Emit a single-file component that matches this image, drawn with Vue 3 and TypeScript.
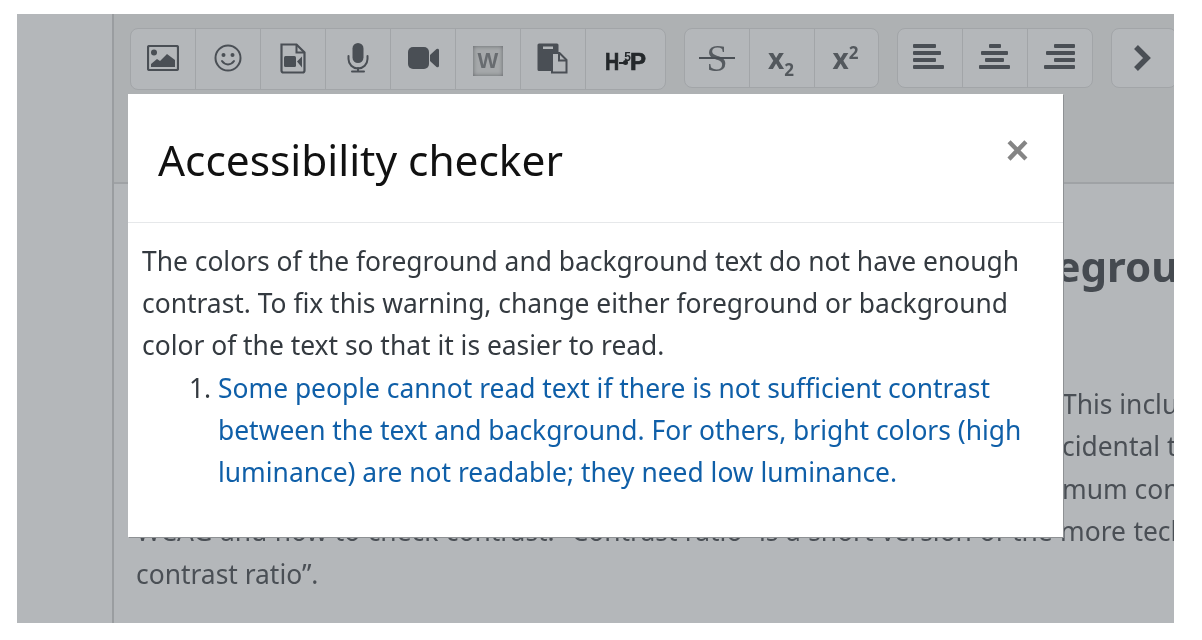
<script setup lang="ts">
const firstGroup = ['image', 'emoji', 'videofile', 'mic', 'video', 'word', 'paste', 'h5p']
const alignGroup = ['left', 'center', 'right']
</script>

<template>
  <div class="page">
    <aside class="side"></aside>
    <main class="main">
      <div class="toolbar">
        <div class="group first">
          <button v-for="b in firstGroup" :key="b" class="btn" :class="{ wide: b === 'h5p' }" type="button">
            <svg v-if="b === 'image'" width="32" height="26" viewBox="0 0 32 26">
              <rect x="1" y="1" width="30" height="24" rx="1.5" fill="none" stroke="#4a4f55" stroke-width="2.2" />
              <circle cx="7" cy="7.500" r="3" fill="#4a4f55" />
              <path d="M4 22v-3l6-5 3 2 7-7 4 3 4 3v7z" fill="#4a4f55" />
            </svg>
            <svg v-else-if="b === 'emoji'" width="28" height="28" viewBox="0 0 28 28">
              <circle cx="14" cy="14" r="12.500" fill="none" stroke="#4a4f55" stroke-width="2" />
              <circle cx="9.500" cy="11" r="2" fill="#4a4f55" />
              <circle cx="18.500" cy="11" r="2" fill="#4a4f55" />
              <path d="M8 17c3 4.500 9 4.500 12 0" fill="none" stroke="#4a4f55" stroke-width="2" stroke-linecap="round" />
            </svg>
            <svg v-else-if="b === 'videofile'" width="26" height="31" viewBox="0 0 26 31">
              <path d="M1.500 1.500h15l8 8v18a2 2 0 0 1-2 2H3.500a2 2 0 0 1-2-2z" fill="none" stroke="#4a4f55" stroke-width="2.200" />
              <path d="M16.500 1.500v8h8" fill="none" stroke="#4a4f55" stroke-width="2" />
              <rect x="4" y="13" width="12" height="11" rx="1.500" fill="#4a4f55" />
              <path d="M17 18.500l5-5v11z" fill="#4a4f55" />
            </svg>
            <svg v-else-if="b === 'mic'" width="22" height="30" viewBox="0 0 22 30">
              <rect x="5.500" y="0" width="11" height="20" rx="5.500" fill="#4a4f55" />
              <path d="M1.500 13v3a9.500 9.500 0 0 0 19 0v-3" fill="none" stroke="#4a4f55" stroke-width="2" stroke-linecap="round" />
              <path d="M11 25v3M5 28.500h12" fill="none" stroke="#4a4f55" stroke-width="2" stroke-linecap="round" />
            </svg>
            <svg v-else-if="b === 'video'" width="31" height="22" viewBox="0 0 31 22">
              <rect x="0" y="0" width="21" height="22" rx="5" fill="#4a4f55" />
              <path d="M22 8l6.500-6q2-1 2.500 1v16q-.5 2-2.500 1L22 14z" fill="#4a4f55" />
            </svg>
            <span v-else-if="b === 'word'" class="word"><span class="word-letter">W</span></span>
            <svg v-else-if="b === 'paste'" width="32" height="31" viewBox="0 0 32 31">
              <path d="M2 .500h18a1.500 1.500 0 0 1 1.500 1.500v8h-6v18H2A1.500 1.500 0 0 1 .500 26.500V2A1.500 1.500 0 0 1 2 .500z" fill="#4a4f55" />
              <rect x="6" y="3.500" width="10" height="2.500" fill="#b4b7ba" />
              <path d="M15 10h7.500l7 7v12.500H15z" fill="#b4b7ba" stroke="#4a4f55" stroke-width="2" />
              <path d="M22 10v7.500h7.500" fill="none" stroke="#4a4f55" stroke-width="2" />
            </svg>
            <span v-else class="h5p"><span class="h5p-h">H</span><i class="h5p-link"></i><b class="h5p-five">5</b>P</span>
          </button>
        </div>
        <div class="group second">
          <button class="btn" type="button"><span class="strike">S</span></button>
          <button class="btn" type="button"><span class="script">x<sub>2</sub></span></button>
          <button class="btn" type="button"><span class="script">x<sup>2</sup></span></button>
        </div>
        <div class="group aligns">
          <button v-for="a in alignGroup" :key="a" class="btn" :class="a" type="button">
            <svg width="32" height="25" viewBox="0 0 32 25" fill="#4a4f55">
              <template v-if="a === 'left'">
                <rect x="1" y="0" width="23" height="4" rx="1" />
                <rect x="1" y="7" width="28" height="4" rx="1" />
                <rect x="1" y="14" width="23" height="4" rx="1" />
                <rect x="1" y="21" width="31" height="4" rx="1" />
              </template>
              <template v-else-if="a === 'center'">
                <rect x="10" y="0" width="12" height="4" rx="1" />
                <rect x="2" y="7" width="27" height="4" rx="1" />
                <rect x="6" y="14" width="19" height="4" rx="1" />
                <rect x="0" y="21" width="31" height="4" rx="1" />
              </template>
              <template v-else>
                <rect x="10" y="0" width="21" height="4" rx="1" />
                <rect x="2" y="7" width="29" height="4" rx="1" />
                <rect x="10" y="14" width="21" height="4" rx="1" />
                <rect x="0" y="21" width="31" height="4" rx="1" />
              </template>
            </svg>
          </button>
        </div>
        <div class="group">
          <button class="btn next" type="button">
            <svg width="20" height="28" viewBox="0 0 20 28">
              <path d="M3 3l11 11L3 25" fill="none" stroke="#4a4f55" stroke-width="5.500" stroke-linejoin="miter" />
            </svg>
          </button>
        </div>
      </div>
      <div class="content">
        <h2 class="behind-title">foreground</h2>
        <p class="behind-line">This includes</p>
        <p class="behind-line">cidental text</p>
        <p class="behind-line">mum contrast</p>
        <p class="behind-full">WCAG and how to check contrast. “Contrast ratio” is a short version of the more technical</p>
        <p class="behind-last">contrast ratio”.</p>
      </div>
    </main>

    <section class="modal">
      <header class="modal-head">
        <h1>Accessibility checker</h1>
        <span class="close">×</span>
      </header>
      <div class="modal-body">
        <p>The colors of the foreground and background text do not have enough contrast. To fix this warning, change either foreground or background color of the text so that it is easier to read.</p>
        <ol>
          <li>
            <a>Some people cannot read text if there is not sufficient contrast between the text and background. For others, bright colors (high luminance) are not readable; they need low luminance.</a>
          </li>
        </ol>
      </div>
    </section>
  </div>
</template>

<style>
html, body { margin: 0; background: #fff; }
</style>

<style scoped>
.page {
  position: relative;
  box-sizing: border-box;
  width: 1202px;
  height: 640px;
  padding: 14px 28px 17px 17px;
  display: flex;
  overflow: hidden;
  font-family: "Noto Sans", "Open Sans", sans-serif;
  color: #4a4f55;
  filter: blur(0.3px);
}
.side {
  width: 95px;
  flex: none;
  background: #b4b7ba;
  border-right: 2px solid #9a9da0;
}
.main {
  flex: 1;
  min-width: 0;
  display: flex;
  flex-direction: column;
  overflow: hidden;
  background: #b4b7ba;
}
.toolbar {
  flex: none;
  box-sizing: border-box;
  height: 170px;
  padding: 14px 0 0 16px;
  display: flex;
  align-items: flex-start;
  gap: 18px;
  background: #aeb1b3;
  border-bottom: 2px solid #9fa2a5;
}
.group {
  flex: none;
  display: flex;
  height: 60px;
  box-sizing: border-box;
  border: 1px solid #a2a5a8;
  border-radius: 8px;
  background: #b4b7ba;
}
.group.first { height: 62px; }
.group.first .btn { padding-bottom: 2px; }
.group.second .btn:last-child { width: 64px; }
.btn {
  width: 65px;
  height: 100%;
  padding: 0;
  flex: none;
  display: flex;
  align-items: center;
  justify-content: center;
  background: transparent;
  border: 0;
  border-left: 1px solid #a2a5a8;
  box-sizing: border-box;
  color: #4a4f55;
  font-family: inherit;
}
.btn:first-child { border-left: 0; width: 64px; }
.btn.wide { width: 80px; }
.aligns svg { margin-bottom: 3px; }
.btn.left svg { margin-right: 4px; }
.btn.next svg { margin: 0 3px 1px 0; }
.word {
  width: 30px;
  height: 30px;
  display: flex;
  align-items: center;
  justify-content: center;
  background: #a5a8aa;
  box-shadow: inset 0 0 4px #63666a;
  margin-top: 6px;
}
.word-letter {
  font: 700 22px "Liberation Sans", sans-serif;
  color: #686c70;
  filter: blur(0.5px);
}
.h5p {
  display: flex;
  align-items: center;
  font: 900 24px/1 "Liberation Sans", sans-serif;
  color: #24282b;
  -webkit-text-stroke: 0.7px #24282b;
  margin-top: 7px;
}
.h5p-h {
  display: inline-block;
  transform: scaleX(0.82);
  transform-origin: left center;
  margin-right: -3px;
}
.h5p-link {
  position: relative;
  width: 8px;
  height: 2px;
  background: #24282b;
  margin: 2px 0 0 0;
}
.h5p-link::after {
  content: "";
  position: absolute;
  right: -1px;
  top: -2px;
  width: 5px;
  height: 5px;
  border-radius: 50%;
  background: #24282b;
}
.h5p-five {
  font-size: 12px;
  margin: -9px -1px 0 -3px;
  font-weight: 700;
  -webkit-text-stroke: 0;
}
.strike {
  position: relative;
  font: 400 38px/1 "Liberation Serif", serif;
  color: #565b60;
}
.strike::after {
  content: "";
  position: absolute;
  left: -7px;
  right: -7px;
  top: 18px;
  height: 2px;
  background: #4a4f55;
}
.script {
  font: 700 28px/1 "Noto Sans", sans-serif;
  color: #53585d;
  margin-right: 2px;
}
.script sub, .script sup {
  font-size: 17px;
  line-height: 0;
}
.content {
  flex: 1;
  position: relative;
  min-height: 0;
  padding: 59px 0 0 22px;
  font-size: 26.400px;
  line-height: 42.400px;
  white-space: nowrap;
}
.behind-title {
  margin: 0 0 94px;
  padding-left: 859px;
  font-size: 42px;
  line-height: 46px;
  font-weight: 700;
  color: #454a50;
}
.behind-line { margin: 0; padding-left: 926px; }
.behind-full { margin: 0; word-spacing: 0.6px; }
.behind-last { margin: 0; }
.modal {
  position: absolute;
  left: 128px;
  top: 94px;
  width: 935px;
  height: 443px;
  background: #fff;
  color: #343a40;
  box-shadow: 1px 1px 0 #8e9194;
}
.modal-head {
  box-sizing: border-box;
  height: 129px;
  padding: 0 34px 0 30px;
  display: flex;
  justify-content: space-between;
  align-items: center;
  border-bottom: 1px solid #e6e8ea;
}
.modal-head h1 {
  margin: 2px 0 0;
  font-size: 42.400px;
  font-weight: 400;
  color: #111;
}
.close {
  font: 700 40px/1 "Liberation Sans", sans-serif;
  color: #858585;
  margin-bottom: 16px;
}
.modal-body {
  padding: 17px 30px 0 14px;
  font-size: 26.400px;
  line-height: 42.200px;
}
.modal-body p { margin: 0; }
.modal-body ol {
  margin: 0;
  padding: 0 0 0 76px;
}
.modal-body a { color: #0f5fa8; }
</style>
